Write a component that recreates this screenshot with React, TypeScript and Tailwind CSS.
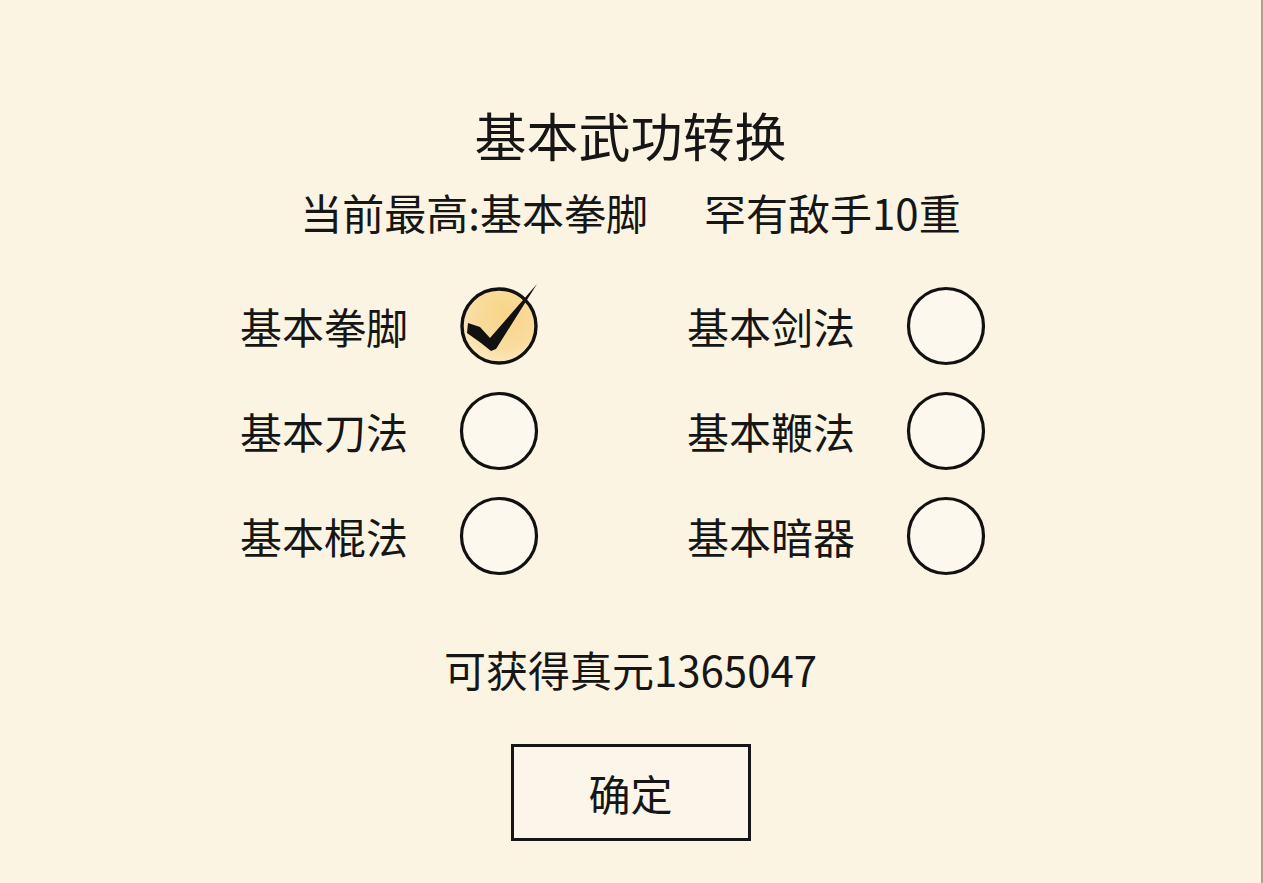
import React from "react"

const options = [
  ["基本拳脚", "基本剑法"],
  ["基本刀法", "基本鞭法"],
  ["基本棍法", "基本暗器"],
]

function EmptyCircle() {
  return (
    <svg width="80" height="80" viewBox="0 0 80 80" className="shrink-0">
      <circle cx="40" cy="40" r="37.5" fill="#fdf8ee" stroke="#111" strokeWidth="3.2" />
      <path d="M50 4 A37.5 37.5 0 0 1 77 32" fill="none" stroke="#111" strokeWidth="1.4" />
    </svg>
  )
}

function CheckedCircle() {
  return (
    <svg width="80" height="80" viewBox="0 0 80 80" className="shrink-0 overflow-visible">
      <defs>
        <radialGradient id="chk" cx="0.6" cy="0.35" r="0.75">
          <stop offset="0" stopColor="#f8d486" />
          <stop offset="0.6" stopColor="#f9dca0" />
          <stop offset="1" stopColor="#fcedcc" />
        </radialGradient>
      </defs>
      <circle cx="40" cy="40" r="37" fill="url(#chk)" stroke="#111" strokeWidth="3.4" />
      <path d="M9 37 L21 41 L31 52 L78 -2 L37 63 L32 65 L22 57 L8 47 Z" fill="#111" />
    </svg>
  )
}

export default function App() {
  return (
    <div
      className="flex h-[883px] w-full flex-col items-center border-r-2 border-[#a8a18e] bg-[#fbf4e3] text-[#161616]"
      style={{ fontFamily: '"Noto Sans CJK SC", "Noto Sans", sans-serif' }}
    >
      <div className="mt-[105px] flex h-[60px] items-center text-[52px] leading-none">基本武功转换</div>
      <div className="mt-[22px] flex h-[50px] items-center gap-[56px] text-[42px] leading-none">
        <span>当前最高:基本拳脚</span>
        <span>罕有敌手10重</span>
      </div>

      <div className="mt-[49px] flex flex-col gap-[25px] self-start pl-[240px]">
        {options.map((row, i) => (
          <div key={i} className="flex items-center gap-[148px]">
            {row.map((name, j) => (
              <div key={name} className="flex h-[80px] items-center">
                <span className="w-[219px] text-[42px] leading-none">{name}</span>
                {i === 0 && j === 0 ? <CheckedCircle /> : <EmptyCircle />}
              </div>
            ))}
          </div>
        ))}
      </div>

      <div className="mt-[68px] flex h-[50px] items-center text-[42px] leading-none">可获得真元1365047</div>

      <button className="mt-[50px] flex h-[97px] w-[240px] items-center justify-center border-[3px] border-[#161616] bg-[#fcf6ea] text-[42px] leading-none">
        确定
      </button>
    </div>
  )
}
